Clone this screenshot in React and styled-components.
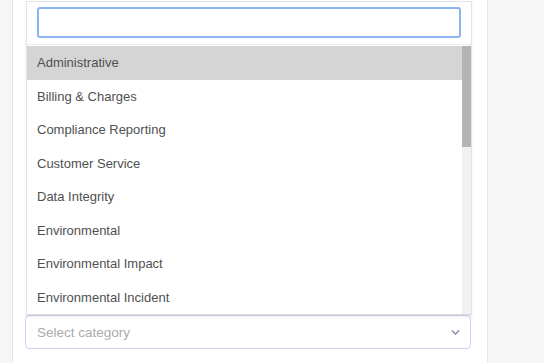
import React, { useState } from "react";
import styled, { createGlobalStyle } from "styled-components";
import { ChevronDown } from "lucide-react";

const categories = [
  "Administrative",
  "Billing & Charges",
  "Compliance Reporting",
  "Customer Service",
  "Data Integrity",
  "Environmental",
  "Environmental Impact",
  "Environmental Incident",
  "Equipment Failure",
  "Health & Safety",
  "Infrastructure",
  "Legal",
  "Maintenance",
  "Operational",
  "Permitting",
  "Public Relations",
  "Quality Assurance",
  "Regulatory",
  "Security",
  "Training",
  "Other",
];

// rows that fit in the open menu
const VISIBLE = 8;

const App = () => {
  const [query, setQuery] = useState("");
  const [active] = useState(0);
  const [offset] = useState(0);

  const shown = categories.slice(offset, offset + VISIBLE);

  return (
    <>
      <GlobalStyle />
      <Page>
        <Card>
          <Field>
            <Menu>
              <SearchBox>
                <Search
                  autoFocus
                  value={query}
                  onChange={(e) => setQuery(e.target.value)}
                />
              </SearchBox>
              <ListWrap>
                <List>
                  {shown.map((c, i) => (
                    <Item key={c} $active={i + offset === active}>
                      {c}
                    </Item>
                  ))}
                </List>
                <Track>
                  <Thumb
                    style={{
                      height: `${(VISIBLE / categories.length) * 100}%`,
                      marginTop: `${(offset / categories.length) * 100}%`,
                    }}
                  />
                </Track>
              </ListWrap>
            </Menu>
            <Select>
              <Placeholder>Select category</Placeholder>
              <ChevronDown size={13} strokeWidth={3} color="#9a9ab0" />
            </Select>
          </Field>
        </Card>
      </Page>
    </>
  );
};

export default App;

const GlobalStyle = createGlobalStyle`
  body {
    margin: 0;
    background: #f6f6f6;
    font-family: "Liberation Sans", Arial, sans-serif;
  }
`;

const Page = styled.div`
  height: 363px;
  padding-left: 12px;
  display: flex;
  overflow: hidden;
`;

const Card = styled.div`
  width: 476px;
  box-sizing: border-box;
  background: #fff;
  border-left: 1px solid #e6e6e6;
  border-right: 1px solid #e6e6e6;
  padding: 315px 16px 0 12px;
`;

const Field = styled.div`
  position: relative;
`;

const Menu = styled.div`
  position: absolute;
  left: 1px;
  right: -1px;
  bottom: 100%;
  height: 314px;
  box-sizing: border-box;
  background: #fff;
  border: 1px solid #e4e4e4;
  border-bottom-color: #dcdcdc;
  box-shadow: 0 2px 3px rgba(0, 0, 0, 0.07);
  display: flex;
  flex-direction: column;
`;

const SearchBox = styled.div`
  padding: 5px 10px 6px 10px;
  border-bottom: 1px solid #ececec;
`;

const Search = styled.input`
  display: block;
  width: 100%;
  height: 31px;
  box-sizing: border-box;
  border: 2px solid #8db4f5;
  border-radius: 3px;
  outline: none;
  font-size: 13px;
  font-family: inherit;
  padding: 0 8px;
`;

const ListWrap = styled.div`
  flex: 1;
  position: relative;
  overflow: hidden;
  margin-top: 1px;
`;

const List = styled.div`
  height: 100%;
  padding-right: 9px;
`;

const Item = styled.div`
  height: 33.5px;
  display: flex;
  align-items: center;
  padding-left: 10px;
  font-size: 13px;
  color: #505050;
  background: ${(p) => (p.$active ? "#d5d5d5" : "#fff")};
  white-space: nowrap;
`;

const Track = styled.div`
  position: absolute;
  top: -2px;
  right: 0;
  bottom: 0;
  width: 9px;
  background: #f1f1f1;
`;

const Thumb = styled.div`
  width: 100%;
  background: #b4b4b4;
`;

const Select = styled.div`
  height: 34px;
  box-sizing: border-box;
  border: 1.5px solid #d8cbf6;
  border-radius: 4px;
  display: flex;
  align-items: center;
  justify-content: space-between;
  padding: 0 8px 0 11px;
  background: #fff;
`;

const Placeholder = styled.span`
  font-size: 13.5px;
  color: #ababab;
`;
